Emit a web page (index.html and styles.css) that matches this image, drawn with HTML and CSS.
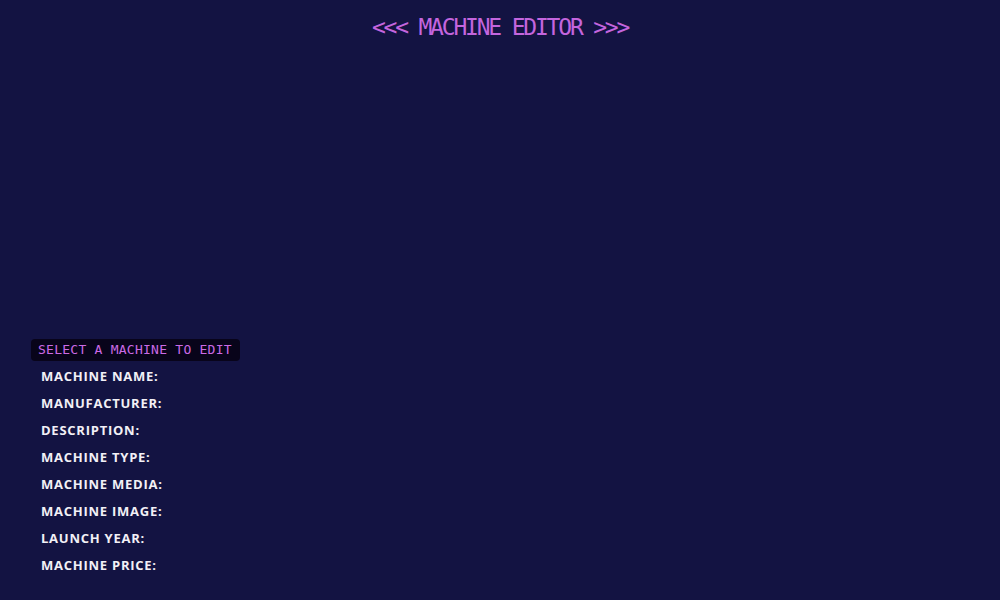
FILE: index.html
```html
<!DOCTYPE html>
<html>
<head>
<meta charset="utf-8">
<link rel="stylesheet" href="styles.css">
</head>
<body>
<div class="page">
  <h1 class="title">&lt;&lt;&lt; MACHINE EDITOR &gt;&gt;&gt;</h1>
  <div class="stage"></div>
  <div class="editor">
    <div class="select">SELECT A MACHINE TO EDIT</div>
    <ul class="fields">
      <li>MACHINE NAME:</li>
      <li>MANUFACTURER:</li>
      <li>DESCRIPTION:</li>
      <li>MACHINE TYPE:</li>
      <li>MACHINE MEDIA:</li>
      <li>MACHINE IMAGE:</li>
      <li>LAUNCH YEAR:</li>
      <li>MACHINE PRICE:</li>
    </ul>
  </div>
</div>
</body>
</html>
```
FILE: styles.css
```css
html, body {
  margin: 0;
  padding: 0;
  background: #131342;
}
.page {
  width: 1000px;
  height: 600px;
  display: flex;
  flex-direction: column;
}
.title {
  margin: 14px 0 0 0;
  text-align: center;
  font-family: "DejaVu Sans Mono", monospace;
  font-weight: normal;
  font-size: 23px;
  letter-spacing: -2.2px;
  line-height: 26px;
  color: #c465de;
}
.stage {
  height: 299px;
}
.editor {
  padding-left: 31px;
  display: flex;
  flex-direction: column;
  align-items: flex-start;
}
.select {
  background: #08041a;
  border-radius: 4px;
  color: #cc6ae6;
  font-family: "DejaVu Sans Mono", monospace;
  font-size: 13px;
  letter-spacing: 0.25px;
  line-height: 22px;
  padding: 0 8px 0 7px;
  height: 22px;
}
.fields {
  list-style: none;
  margin: 6px 0 0 0;
  padding: 0 0 0 10px;
  display: flex;
  flex-direction: column;
  gap: 9px;
}
.fields li {
  font-family: "Open Sans", sans-serif;
  font-weight: 700;
  font-size: 13px;
  line-height: 18px;
  letter-spacing: 0.75px;
  color: #f2f0f6;
}
```
